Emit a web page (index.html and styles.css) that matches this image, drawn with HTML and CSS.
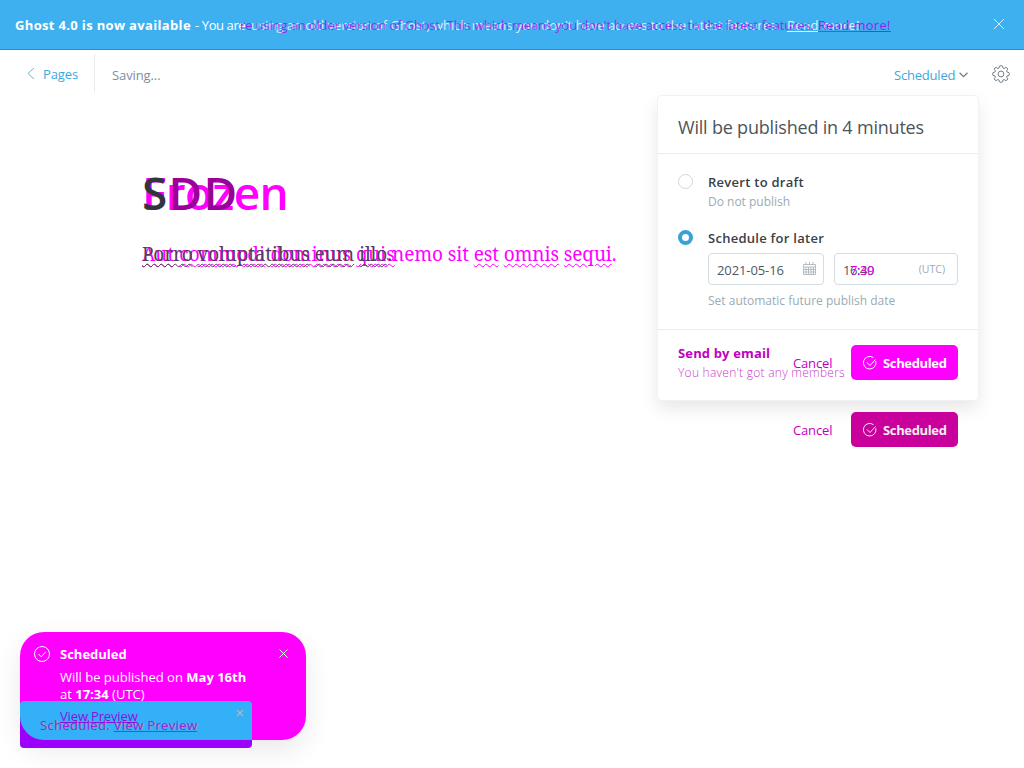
FILE: index.html
```html
<!DOCTYPE html>
<html lang="en">
<head>
<meta charset="utf-8">
<title>Ghost editor</title>
<link rel="stylesheet" href="styles.css">
</head>
<body>
<div class="banner">
  <div class="banner-text"><b>Ghost 4.0 is now available</b><span class="lead">- You are</span><span class="rest">using an old version of Ghost, which means you don't have access to the latest features.</span><u>Read more!</u></div>
  <div class="banner-text alt"><span class="altrest">re using an older version of Ghost. This which means you don't have access to the latest features.</span><u>Read more!</u></div>
  <svg class="banner-close" viewBox="0 0 12 12"><path d="M1 1l10 10M11 1L1 11"/></svg>
</div>
<header class="toolbar">
  <a class="back"><svg viewBox="0 0 8 13"><path d="M7 1L1 6.500l6 5.500"/></svg><span class="t-pages">Pages</span></a>
  <span class="saving">Saving...</span>
  <a class="status"><span class="t-status">Scheduled</span><svg viewBox="0 0 8 5"><path d="M.5.5L4 4 7.500.5"/></svg></a>
  <svg class="gear" viewBox="0 0 18 18"><path d="M7.500 1.100Q9 .2 10.500 1.100L11 3 12.100 3.500 13.900 2.400Q15.400 2.700 15.700 4.200L14.600 5.900 15.100 7.100 17 7.600Q17.800 9 17 10.400L15.100 10.900 14.600 12.100 15.700 13.800Q15.400 15.300 13.900 15.600L12.100 14.500 11 15 10.500 16.900Q9 17.800 7.500 16.900L7 15 5.900 14.500 4.100 15.600Q2.600 15.300 2.300 13.800L3.400 12.100 2.900 10.900 1 10.400Q.2 9 1 7.600L2.900 7.100 3.400 5.900 2.300 4.200Q2.600 2.700 4.100 2.400L5.900 3.500 7 3Z"/><circle cx="9" cy="9" r="2.900"/></svg>
</header>
<main class="editor">
  <h1 class="layers"><span class="title-alt">Frozen</span><span class="title"><i>S</i>DD</span></h1>
  <p class="layers"><span class="body-alt"><s>Aut</s> <s>commodi</s> <s>dominus</s> <s>quis</s></span><span class="body-main"><s>Porro</s> <s>voluptatibus</s> <s>eum</s> <s>illo</s>.</span><span class="body-end">nemo sit <s>est</s> <s>omnis</s> <s>sequi</s>.</span></p>
</main>
<section class="popover">
  <h2><span class="t-head">Will be published in 4 minutes</span></h2>
  <div class="options">
    <div class="option"><i class="radio"></i><div><b class="t-revert">Revert to draft</b><small class="t-dnp">Do not publish</small></div></div>
    <div class="option later"><i class="radio on"></i><div><b class="t-later">Schedule for later</b>
      <div class="fields">
        <div class="field date"><span class="t-date">2021-05-16</span><svg viewBox="0 0 13 13"><path d="M.5 2.500h12v10H.5zM.5 5h12M.5 7.500h12M.5 10h12M3 5v7.500M5.500 5v7.500M8 5v7.500M10.500 5v7.500M3 0v3M6.500 0v3M10 0v3"/></svg></div>
        <div class="field time"><span class="t-time">16:40<em>7:39</em></span><small class="t-utc">(UTC)</small></div>
      </div>
      <small class="t-set">Set automatic future publish date</small></div></div>
  </div>
  <footer>
    <div class="email"><b class="t-send">Send by email</b><small class="t-members">You haven't got any members</small></div>
    <div class="actions"><span class="t-cancel">Cancel</span><a class="button"><svg viewBox="0 0 14 14"><path d="M4 6.500l3 3 5.500-6M12.800 5.200A6.300 6.300 0 1 1 10.500 1.700"/></svg><b class="t-button">Scheduled</b></a></div>
    <div class="actions lower"><span class="t-cancel">Cancel</span><a class="button dark"><svg viewBox="0 0 14 14"><path d="M4 6.500l3 3 5.500-6M12.800 5.200A6.300 6.300 0 1 1 10.500 1.700"/></svg><b class="t-button">Scheduled</b></a></div>
  </footer>
</section>
<aside class="toast">
  <svg class="check" viewBox="0 0 16 16"><circle cx="8" cy="8" r="7.500"/><path d="M4.500 8l2.800 2.800 4.500-5"/></svg>
  <div class="toast-copy"><b class="t-toast">Scheduled</b><p><span class="t-line">Will be published on <b>May 16th</b></span><span class="t-line2">at <b>17:34</b> (UTC)</span></p></div>
  <svg class="toast-close" viewBox="0 0 9 9"><path d="M.5.5l8 8M8.500.5l-8 8"/></svg>
</aside>
<aside class="notice"><div class="shared"></div><u class="view">View Preview</u><div class="notice-copy under">Scheduled. <u>View Preview</u></div><div class="notice-copy">Scheduled. <u>View Preview</u></div><svg viewBox="0 0 8 8"><path d="M1 1l6 6M7 1L1 7"/></svg></aside>
</body>
</html>
```
FILE: styles.css
```css
* { box-sizing: border-box; }
body { margin: 0; height: 768px; overflow: hidden; position: relative; background: #fff; font: 13px/18px "Open Sans", "Noto Sans", sans-serif; color: #394047; }
svg { fill: none; stroke: currentColor; stroke-width: 1; display: block; }
h1, h2, p { margin: 0; font-weight: 400; }
span, small, b { white-space: nowrap; }
small { font-size: 12px; color: #9babb4; font-weight: 400; }
.banner { position: relative; height: 50px; background: #3eb0ef; border-bottom: 1px solid #1b93d5; color: #fff; }
.banner-text { position: absolute; left: 15px; top: 16px; display: flex; white-space: nowrap; }
.banner-text b { width: 180px; font-weight: 700; letter-spacing: .34px; }
.banner-text .lead { width: 56px; letter-spacing: -.4px; }
.banner-text .rest { width: 536px; letter-spacing: -.03px; opacity: .8; }
.banner-text u { width: 73px; opacity: .85; letter-spacing: .3px; }
.banner-text.alt { left: 240px; color: #b000ee; }
.altrest { width: 578px; letter-spacing: -.14px; opacity: .75; }
.banner-close { position: absolute; left: 993px; top: 18px; width: 12px; height: 12px; opacity: .8; }
.toolbar { height: 46px; display: flex; align-items: center; color: #3ba8dc; }
.back { width: 95px; height: 38px; padding: 0 0 0 27px; display: flex; align-items: center; gap: 8px; border-right: 1px solid #e7ecef; }
.back svg { width: 8px; height: 13px; margin-top: 1px; opacity: .8; }
.t-pages { padding-top: 2px; letter-spacing: -.1px; }
.saving { margin: 4px 0 0 17px; color: #7e8f99; flex: 1; letter-spacing: -.1px; }
.status { width: 98px; display: flex; align-items: center; padding-top: 4px; }
.t-status { width: 65px; letter-spacing: -.2px; }
.status svg { width: 9px; height: 6px; color: #667785; }
.gear { width: 18px; height: 18px; margin: 1px 14px 0 0; color: #73818b; }
.editor { padding: 70px 142px 0; }
.layers { position: relative; }
h1 { height: 68px; font: 600 46px/52px "Open Sans", sans-serif; }
h1 span { position: absolute; left: 0; top: 0; }
.title-alt { color: #f0f; letter-spacing: -.7px; }
.title { color: #9b009b; letter-spacing: 1.3px; }
.title i { font-style: normal; color: #30363c; }
.editor p { height: 30px; font: 19px/26px "Noto Serif", "Liberation Serif", serif; }
.editor p span { position: absolute; top: 7px; left: 0; color: #f0f; letter-spacing: -.1px; }
.editor p .body-main { color: #583c5c; letter-spacing: -.15px; }
.editor p .body-end { left: 250px; }
.editor p .body-alt { letter-spacing: .15px; }
s { text-decoration: underline wavy 1px; text-underline-offset: 2px; }
.popover { position: absolute; left: 658px; top: 96px; width: 320px; height: 304px; background: #fff; border-radius: 4px; box-shadow: 0 0 0 1px #f1f2f3, 0 8px 18px rgba(0,0,0,.1); }
h2 { height: 58px; padding: 18px 20px; border-bottom: 1px solid #e9edef; font-size: 18px; line-height: 27px; color: #4d555a; letter-spacing: -.2px; }
.options { height: 176px; border-bottom: 1px solid #e9edef; padding: 19px 20px; }
.option { display: flex; gap: 15px; height: 56px; }
.option b, .option small { display: block; }
.option b { font-weight: 600; color: #394047; letter-spacing: .27px; }
.option small { line-height: 20px; }
.t-dnp { padding-top: 1px; }
.radio { width: 15px; height: 15px; border: 1px solid #cdd8df; border-radius: 50%; flex: none; margin-top: 1px; }
.radio.on { border: 4px solid #39a1d3; }
.fields { display: flex; gap: 10px; margin: 6px 0; }
.field { height: 32px; border: 1px solid #d4dde2; border-radius: 4px; padding: 2px 8px 0; display: flex; align-items: center; justify-content: space-between; color: #4d5962; }
.date { width: 116px; padding-right: 7px; }
.t-date { letter-spacing: -.1px; }
.time { width: 124px; padding-right: 12px; }
.field svg { width: 13px; height: 13px; color: #a4b0b8; stroke-width: .8; margin-top: -3px; }
.t-time { position: relative; letter-spacing: -.4px; }
.t-time em { position: absolute; left: 7px; top: 0; font-style: normal; color: #e000e0; }
.field .t-utc { font-size: 10.5px; margin-top: -3px; }
footer { position: relative; padding: 14px 20px; }
.email { color: #c000c0; }
.email b, .email small { display: block; line-height: 19px; }
.email b { letter-spacing: .15px; }
.email small { color: #c83cc8; font-weight: 300; letter-spacing: .26px; }
.actions { position: absolute; left: 135px; top: 15px; width: 165px; display: flex; justify-content: space-between; align-items: center; color: #c000c0; }
.t-cancel { letter-spacing: -.15px; }
.actions.lower { top: 82px; }
.button { width: 107px; height: 35px; padding: 0 12px; border-radius: 5px; background: #f0f; color: #fff; display: flex; align-items: center; gap: 6px; letter-spacing: -.35px; }
.button.dark { background: #c9009b; color: #eee; }
.button svg { width: 14px; height: 14px; flex: none; }
.toast { position: absolute; left: 20px; top: 632px; width: 286px; height: 108px; padding: 13px 18px 0 14px; border-radius: 24px; background: #f0f; color: #fff; display: flex; box-shadow: 0 10px 28px rgba(0,0,0,.09); }
.check { width: 16px; height: 16px; margin-top: 1px; }
.toast-copy { margin-left: 10px; flex: 1; }
.toast p { margin-top: 6px; line-height: 17px; }
.toast p > span { display: block; }
.toast-close { width: 9px; height: 9px; margin-top: 4px; }
.notice { position: absolute; left: 20px; top: 701px; width: 232px; height: 47px; background: #9c00fa; border-radius: 4px; }
.shared { height: 39px; background: #34b0f8; border-radius: 4px 4px 0 24px; }
.view { position: absolute; left: 40px; top: 6px; color: #8a10df; line-height: 18px; letter-spacing: -.15px; }
.notice-copy { position: absolute; left: 20px; top: 15px; color: #a000f0; white-space: nowrap; opacity: .75; letter-spacing: .35px; }
.notice-copy.under { color: #a29a9a; left: 21px; opacity: 1; }
.notice svg { position: absolute; left: 216px; top: 8px; width: 8px; height: 8px; color: #b1b5bd; stroke-width: 1.200; }
```
